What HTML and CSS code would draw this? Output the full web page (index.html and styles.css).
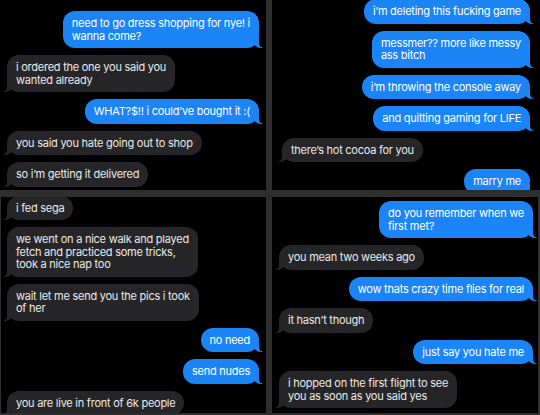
FILE: index.html
```html
<!DOCTYPE html>
<html>
<head>
<meta charset="utf-8">
<link rel="stylesheet" href="styles.css">
</head>
<body>
<div class="screen">
  <section class="panel p-tl">
    <div class="msg sent">need to go dress shopping for nye! i<br>wanna come?</div>
    <div class="msg recv">i ordered the one you said you<br>wanted already</div>
    <div class="msg sent">WHAT?$!! i could’ve bought it :(</div>
    <div class="msg recv">you said you hate going out to shop</div>
    <div class="msg recv">so i’m getting it delivered</div>
  </section>
  <section class="panel p-tr">
    <div class="msg sent">i’m deleting this fucking game</div>
    <div class="msg sent">messmer?? more like messy<br>ass bitch</div>
    <div class="msg sent">i’m throwing the console away</div>
    <div class="msg sent">and quitting gaming for LIFE</div>
    <div class="msg recv">there’s hot cocoa for you</div>
    <div class="msg sent">marry me</div>
  </section>
  <section class="panel p-bl">
    <div class="msg recv">i fed sega</div>
    <div class="msg recv">we went on a nice walk and played<br>fetch and practiced some tricks,<br>took a nice nap too</div>
    <div class="msg recv">wait let me send you the pics i took<br>of her</div>
    <div class="msg sent">no need</div>
    <div class="msg sent">send nudes</div>
    <div class="msg recv">you are live in front of 6k people</div>
  </section>
  <section class="panel p-br">
    <div class="msg sent">do you remember when we<br>first met?</div>
    <div class="msg recv">you mean two weeks ago</div>
    <div class="msg sent">wow thats crazy time flies for real</div>
    <div class="msg recv">it hasn’t though</div>
    <div class="msg sent">just say you hate me</div>
    <div class="msg recv">i hopped on the first flight to see<br>you as soon as you said yes</div>
  </section>
</div>
</body>
</html>
```

FILE: styles.css
```css
html, body {
  margin: 0;
  padding: 0;
  background: #2e2e2e;
}

.screen {
  width: 540px;
  height: 415px;
  display: grid;
  grid-template-columns: 266px 268px;
  grid-template-rows: 190px 218px;
  column-gap: 6px;
  row-gap: 7px;
  background: #2e2e2e;
  font-family: "Inter", "Liberation Sans", sans-serif;
  font-size: 11px;
  letter-spacing: -0.25px;
}

.panel {
  background: #000;
  overflow: hidden;
  display: flex;
  flex-direction: column;
  gap: 7px;
}

.p-tl {
  padding: 11px 7px 0 7px;
}

.p-tr {
  padding: 0 10px;
}

.p-tr .msg:first-child {
  margin-top: -1px;
}

.p-bl {
  margin-left: 1px;
  margin-bottom: 2px;
  padding: 0 7px 0 6px;
}

.p-bl .msg:first-child {
  margin-top: -1.5px;
}

.p-br {
  margin-right: 2px;
  margin-bottom: 2px;
  padding: 4px 5px 0 7px;
}

.msg {
  position: relative;
  flex-shrink: 0;
  align-self: flex-start;
  padding: 6px 9px;
  border-radius: 12px;
  line-height: 12.5px;
  white-space: nowrap;
}

.sent {
  align-self: flex-end;
  background: #1b84f7;
  color: #fff;
}

.recv {
  background: #262628;
  color: #ebebeb;
}

.sent::before,
.sent::after,
.recv::before,
.recv::after {
  content: "";
  position: absolute;
  bottom: 0;
}

.sent::before {
  right: -4px;
  width: 10px;
  height: 10px;
  background: #1b84f7;
  border-bottom-left-radius: 8px 8px;
}

.sent::after {
  right: -6px;
  width: 6px;
  height: 10px;
  background: #000;
  border-bottom-left-radius: 5px;
}

.recv::before {
  left: -4px;
  width: 10px;
  height: 10px;
  background: #262628;
  border-bottom-right-radius: 8px 8px;
}

.recv::after {
  left: -6px;
  width: 6px;
  height: 10px;
  background: #000;
  border-bottom-right-radius: 5px;
}
```
